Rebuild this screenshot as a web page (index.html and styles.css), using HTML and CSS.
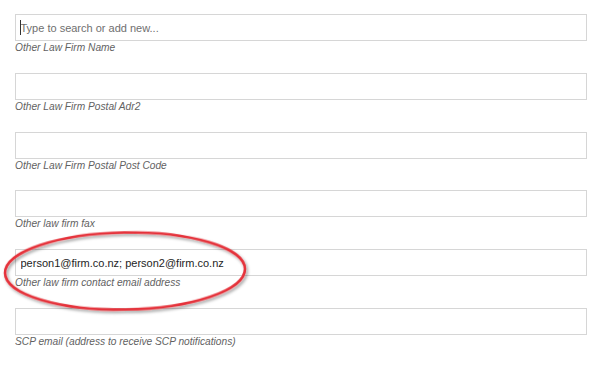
FILE: index.html
```html
<!DOCTYPE html>
<html lang="en">
<head>
    <meta charset="UTF-8">
    <meta name="viewport" content="width=device-width, initial-scale=1.0">
    <title>Other Law Firm</title>
    <link rel="stylesheet" href="styles.css">
</head>
<body>

    <div class="form">
        <div class="field">
            <div class="input-wrap">
                <input type="text" class="text-input" placeholder="Type to search or add new...">
                <span class="caret"></span>
            </div>
            <div class="field-label">Other Law Firm Name</div>
        </div>

        <div class="field">
            <input type="text" class="text-input">
            <div class="field-label">Other Law Firm Postal Adr2</div>
        </div>

        <div class="field">
            <input type="text" class="text-input">
            <div class="field-label">Other Law Firm Postal Post Code</div>
        </div>

        <div class="field">
            <input type="text" class="text-input">
            <div class="field-label">Other law firm fax</div>
        </div>

        <div class="field">
            <input type="text" class="text-input" value="person1@firm.co.nz; person2@firm.co.nz">
            <div class="field-label">Other law firm contact email address</div>
        </div>

        <div class="field">
            <input type="text" class="text-input">
            <div class="field-label">SCP email (address to receive SCP notifications)</div>
        </div>
    </div>

    <!-- hand drawn highlight round the email field -->
    <svg class="highlight" width="602" height="365" viewBox="0 0 602 365">
        <defs>
            <filter id="shadow" x="-10%" y="-20%" width="120%" height="140%">
                <feDropShadow dx="1.5" dy="2" stdDeviation="1.8" flood-color="#000" flood-opacity="0.4"/>
            </filter>
        </defs>
        <ellipse cx="125" cy="271" rx="120" ry="38.5" transform="rotate(-1 125 271)"
                 fill="none" stroke="#e5323a" stroke-width="2.6" filter="url(#shadow)"/>
    </svg>

</body>
</html>
```

FILE: styles.css
```css
body {
    margin: 0;
    background-color: #fff;
    font-family: "Liberation Sans", Arial, sans-serif;
}

.form {
    padding: 14px 15.5px 0 15px;
}

.field {
    margin-bottom: 17.8px;
}

.input-wrap {
    position: relative;
}

.text-input {
    display: block;
    width: 100%;
    height: 27px;
    box-sizing: border-box;
    margin: 0;
    padding: 0 4.5px;
    border: 1px solid #d6d6d6;
    border-radius: 0;
    outline: none;
    font-family: "Liberation Sans", Arial, sans-serif;
    font-size: 11px;
    color: #1e1e1e;
    background: #fff;
}

.text-input::placeholder {
    color: #6f6f6f;
}

/* blinking caret frozen in place */
.caret {
    position: absolute;
    left: 5px;
    top: 6px;
    width: 1px;
    height: 15px;
    background-color: #333;
}

.field-label {
    font-size: 10.2px;
    line-height: 14px;
    font-style: italic;
    color: #626262;
}

.highlight {
    position: absolute;
    top: 0;
    left: 0;
    pointer-events: none;
}
```
